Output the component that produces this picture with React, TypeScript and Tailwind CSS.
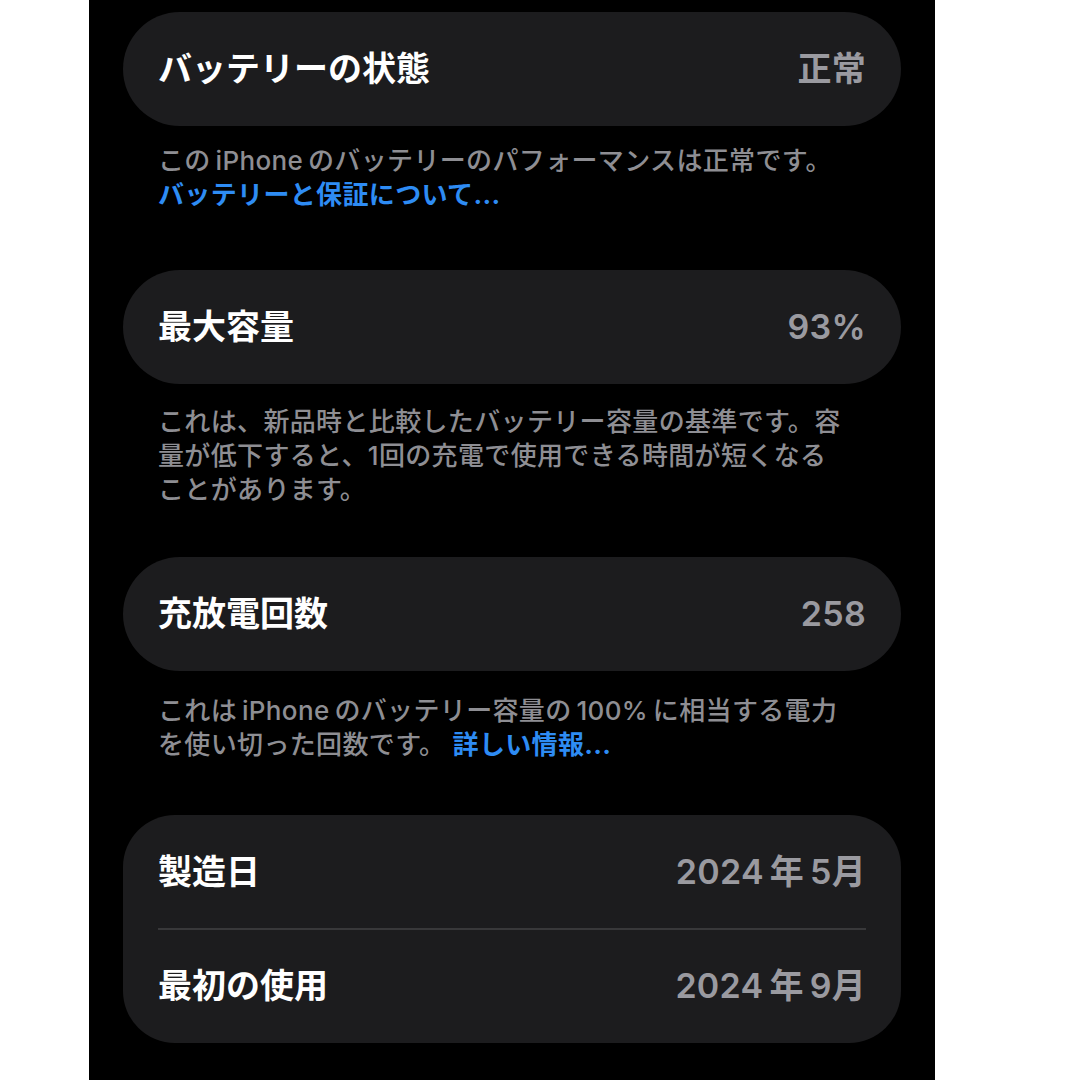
import React from 'react';

const FONT = 'font-["Inter","Noto_Sans_CJK_JP",sans-serif]';

function Row({ label, value }: { label: string; value: string }) {
  return (
    <div className="flex h-[114px] items-center justify-between px-[35px]">
      <span className="text-[34px] font-bold leading-none text-white">{label}</span>
      <span className="text-[34px] font-semibold leading-none tracking-[0.3px] text-[#9a9aa0]">{value}</span>
    </div>
  );
}

function Card({ label, value }: { label: string; value: string }) {
  return (
    <div className="rounded-[57px] bg-[#1c1c1e]">
      <Row label={label} value={value} />
    </div>
  );
}

function Footer({ children, className = '' }: { children: React.ReactNode; className?: string }) {
  return (
    <p className={`px-[35px] text-[26px] font-medium leading-[34px] tracking-[0.35px] text-[#8e8e93] ${className}`}>
      {children}
    </p>
  );
}

export default function App() {
  return (
    <div className={`min-h-[1080px] w-[1080px] bg-white ${FONT}`}>
      <div className="ml-[89px] h-[1080px] w-[846px] overflow-hidden bg-black px-[34px] pt-[12px]">
        <Card label="バッテリーの状態" value="正常" />
        <Footer className="mt-[18px] mb-[58px]">
          この{'\u2009'}iPhone{'\u2009'}のバッテリーのパフォーマンスは正常です。
          <br />
          <span className="font-bold text-[#2e8cf4]">バッテリーと保証について...</span>
        </Footer>

        <Card label="最大容量" value="93%" />
        <Footer className="mt-[21px] mb-[50px]">
          これは、新品時と比較したバッテリー容量の基準です。容
          <br />
          量が低下すると、1回の充電で使用できる時間が短くなる
          <br />
          ことがあります。
        </Footer>

        <Card label="充放電回数" value="258" />
        <Footer className="mt-[23px] mb-[53px]">
          これは{'\u2009'}iPhone{'\u2009'}のバッテリー容量の{'\u2009'}100%{'\u2009'}に相当する電力
          <br />
          を使い切った回数です。 <span className="font-bold text-[#2e8cf4]">詳しい情報...</span>
        </Footer>

        <div className="rounded-[52px] bg-[#1c1c1e]">
          <Row label="製造日" value={'2024\u2009年\u20095月'} />
          <div className="mx-[35px] -my-px h-[2px] bg-[#38383a]" />
          <Row label="最初の使用" value={'2024\u2009年\u20099月'} />
        </div>
      </div>
    </div>
  );
}
